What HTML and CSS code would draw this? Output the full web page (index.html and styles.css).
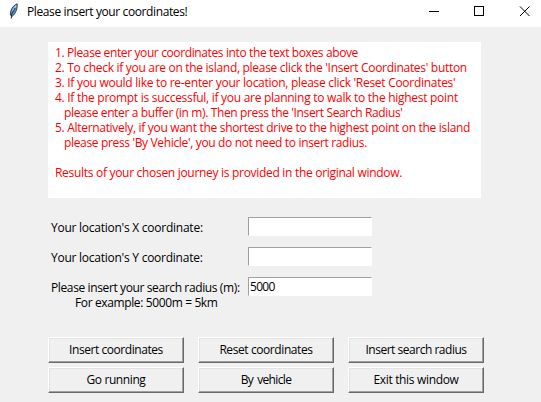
FILE: index.html
```html
<!DOCTYPE html>
<html lang="en">
<head>
<meta charset="utf-8">
<title>Please insert your coordinates!</title>
<link rel="stylesheet" href="styles.css">
</head>
<body>
<header class="titlebar">
  <svg class="feather" width="10" height="17" viewBox="0 0 10 17">
    <path d="M8.2 0.8C5.5 1.6 2.7 4.8 1.7 8.2L1.3 12L3.4 13.2C6 11.2 8.6 6.5 8.2 0.8Z" fill="#5e98d8" stroke="#17212e" stroke-width="0.8"/>
    <path d="M7 2.5L3.8 8" stroke="#a9cff4" stroke-width="1.4"/>
    <path d="M6.2 5L2.8 11L2.2 15.5" fill="none" stroke="#111820" stroke-width="0.9"/>
  </svg>
  <span class="title">Please insert your coordinates!</span>
  <svg class="controls" width="98" height="12" viewBox="0 0 98 12" fill="none" stroke="#000">
    <path d="M0 5.5H10"/>
    <rect x="45.5" y="0.5" width="9" height="9"/>
    <path d="M91 0.5L100.5 10M100.5 0.5L91 10"/>
  </svg>
</header>
<main>
  <section class="panel">
    <p class="l1">1. Please enter your coordinates into the text boxes above</p>
    <p class="l2">2. To check if you are on the island, please click the 'Insert Coordinates' button</p>
    <p class="l3">3. If you would like to re-enter your location, please click 'Reset Coordinates'</p>
    <p class="l4">4. If the prompt is successful, if you are planning to walk to the highest point</p>
    <p class="l5 indent">please enter a buffer (in m). Then press the 'Insert Search Radius'</p>
    <p class="l6">5. Alternatively, if you want the shortest drive to the highest point on the island</p>
    <p class="l7 indent">please press 'By Vehicle', you do not need to insert radius.</p>
    <p class="l8 gap">Results of your chosen journey is provided in the original window.</p>
  </section>
  <form class="fields">
    <label class="f1" for="x">Your location's X coordinate:</label><input id="x" type="text">
    <label class="f1" for="y">Your location's Y coordinate:</label><input id="y" type="text">
    <label class="f3" for="r">Please insert your search radius (m):<br><span class="example">For example: 5000m = 5km</span></label><input id="r" type="text" value="5000">
  </form>
  <div class="buttons">
    <button class="b1">Insert coordinates</button><button class="b2">Reset coordinates</button><button class="b3">Insert search radius</button>
    <button class="b4">Go running</button><button class="b5">By vehicle</button><button class="b6">Exit this window</button>
  </div>
</main>
</body>
</html>
```
FILE: styles.css
```css
* { box-sizing: border-box; }
body { margin: 0; height: 402px; overflow: hidden; background: #f0f0f0; font: 12px/15px "Open Sans", sans-serif; color: #000; }
.titlebar { display: flex; height: 27px; background: #fff; padding-left: 9px; }
.feather { margin-top: 3px; }
.title { margin: 4px 0 0 8px; white-space: nowrap; letter-spacing: -0.39px; }
.controls { margin: 6px 14px 0 auto; overflow: visible; }
main { padding: 15px 0 0 48px; }
.panel { width: 433px; height: 156px; background: #fff; color: #f00; padding: 3px 0 0 7px; white-space: nowrap; }
.panel p { margin: 0; height: 15px; }
.panel .indent { padding-left: 9px; }
.panel .gap { margin-top: 15px; }
.l1 { letter-spacing: -0.38px; }
.l2 { letter-spacing: -0.3px; }
.l3 { letter-spacing: -0.285px; }
.l4 { letter-spacing: -0.28px; }
.l5 { letter-spacing: -0.37px; }
.l6 { letter-spacing: -0.305px; }
.l7 { letter-spacing: -0.345px; }
.l8 { letter-spacing: -0.3px; }
.fields { display: grid; grid-template-columns: 197px 124px; grid-auto-rows: 19px; row-gap: 11px; margin: 19px 0 0 3px; white-space: nowrap; }
.fields label { padding-top: 3px; }
.f1 { letter-spacing: -0.25px; }
.f3 { letter-spacing: -0.38px; }
.example { margin-left: 24px; letter-spacing: -0.375px; }
input { width: 124px; height: 19px; border: 1px solid #fff; border-top-color: #a0a0a0; border-left-color: #a0a0a0; background: #fff; padding: 0 0 0 1px; font: inherit; letter-spacing: -0.7px; border-radius: 0; outline: 0; }
.buttons { display: grid; grid-template-columns: repeat(3, 136px); grid-auto-rows: 26px; gap: 4px 14px; margin-top: 41px; }
button { border: 1px solid; border-color: #fff #696969 #696969 #fff; box-shadow: inset -1px -1px #a0a0a0, inset 1px 1px #e3e3e3; background: #f0f0f0; padding: 0 0 1px; font: inherit; color: #000; border-radius: 0; white-space: nowrap; }
.b1 { letter-spacing: -0.44px; }
.b2 { letter-spacing: -0.41px; }
.b3 { letter-spacing: -0.48px; }
.b4 { letter-spacing: -0.4px; }
.b5 { letter-spacing: -0.65px; word-spacing: 1.5px; }
.b6 { letter-spacing: -0.33px; }
```
